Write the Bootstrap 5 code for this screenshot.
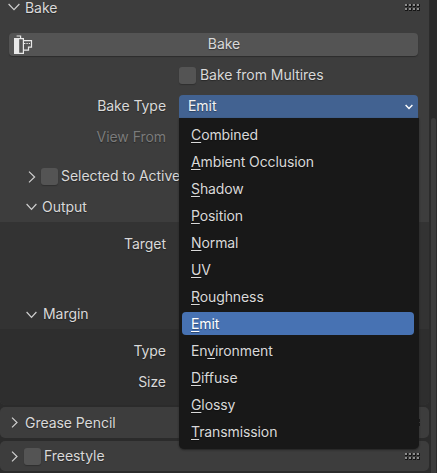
<!doctype html>
<html lang="en"><head><meta charset="utf-8">
<link href="https://cdn.jsdelivr.net/npm/bootstrap@5.3.0/dist/css/bootstrap.min.css" rel="stylesheet">
<style>
html,body{margin:0;height:473px;overflow:hidden;background:#2b2b2b}
body{font-family:Inter,"Noto Sans",sans-serif;font-size:14px;line-height:17px;letter-spacing:-.05px;color:#d9d9d9;text-shadow:0 1px 1px rgba(0,0,0,.35)}
.stage{position:relative;width:437px;height:473px;overflow:hidden}
.pane{width:429px;height:473px;flex:none}
.gut{width:8px;flex:none;padding:118px 1px 0 2px}
.sthumb{height:100%;background:#3d3d3d;border-radius:3px 3px 0 0}
.bakebox{background:#3d3d3d;height:405px;border-radius:0 0 5px 5px;overflow:hidden}
.hdr{height:14px}
.chev{flex:none}
.grip{margin-left:auto;margin-right:9px;flex:none}
.lbl{width:166px;text-align:right;flex:none}
.dim{color:#7b7b7b}
.ln{height:23px}
.ln>span:not(.tick),.selbox>span,.subhead>span,.head2>span,.fs>span:not(.tick){padding-bottom:2px}
.bakebtn{margin:19px 11px 0 9px;height:23px;padding-left:21px;background:#545454;border-radius:4px;position:relative;text-align:center;line-height:21px;box-shadow:0 1px 1px #2c2c2c}
.bakebtn svg{position:absolute;left:4px;top:1px}
.tick{width:17px;height:17px;background:#545454;border-radius:3px;flex:none;box-shadow:0 1px 1px #2f2f2f}
.selbox{width:239px;margin-left:13px;height:23px;background:#426291;border-radius:4px 4px 0 0;padding:0 5px 0 9px;color:#f2f2f2}
.subhead{height:30px;margin-top:4px}
.body1{background:#333333;height:107px;padding-top:11px}
.head2{height:29px;margin-top:44px}
.body2{background:#2e2e2e;height:76px;padding-top:11px}
.menu{position:absolute;left:179px;top:118px;width:240px;height:331px;background:#181818;border-radius:0 0 5px 5px;padding:3px 5px 0 3px;box-shadow:0 1px 2px #222;letter-spacing:-.1px}
.mi{height:27px;line-height:27px;padding-left:9px;color:#d9d9d9}
.mi.on{background:#4772b3;color:#fff;height:23px;line-height:23px;margin:2px 0;border-radius:4px}
.mi u{text-decoration-thickness:1px;text-underline-offset:2px}
.closed{height:31px;background:#3d3d3d;border-radius:5px;margin-top:2px}
.closed+.closed{margin-top:3px;height:30px}
</style></head><body>
<svg width="0" height="0" class="position-absolute"><defs><g id="dots"><g id="dotcol"><rect x="0" y="0" width="2" height="2" fill="#8c8c8c"/><rect x="0" y="4" width="2" height="2" fill="#8c8c8c"/><rect x="2" y="0" width="1" height="2" fill="#161616"/><rect x="2" y="4" width="1" height="2" fill="#161616"/><rect x="0" y="2" width="3" height="1" fill="#161616"/><rect x="0" y="6" width="3" height="1" fill="#161616"/></g><use href="#dotcol" x="4"/><use href="#dotcol" x="8"/><use href="#dotcol" x="12"/></g></defs></svg>
<div class="stage d-flex">
 <div class="pane">
  <div class="bakebox">
   <div class="hdr d-flex align-items-center">
    <svg class="chev" style="margin-left:8px" width="12" height="8" viewBox="0 0 12 8" fill="none" stroke="#cfcfcf" stroke-width="1.2"><path d="M.6 1 6 6.6 11.4 1"/></svg><span style="margin-left:5px">Bake</span><svg class="grip" width="15" height="7"><use href="#dots"/></svg>
   </div>
   <div class="bakebtn">
    <svg width="21" height="21" viewBox="0 0 21 21" fill="none" stroke="#e8e8e8" stroke-width="1.2"><path d="M3.6 2h4v2"/><path d="M1.6 4.6h8.8v14.8H1.6z"/><path d="M1.6 5.5h4v13.5h-4z" fill="#e8e8e8"/><path d="M10 6.6h8.5v6.6h-3v3H10"/><path d="M11 9.5h6" stroke-dasharray="1.4 1" stroke-width="1"/></svg>
    Bake</div>
   <div class="d-flex align-items-center ln" style="margin-top:8px;padding-left:179px;gap:4px"><span class="tick"></span><span>Bake from Multires</span></div>
   <div class="d-flex align-items-center ln" style="margin-top:8px"><span class="lbl">Bake Type</span>
    <div class="selbox d-flex align-items-center justify-content-between"><span>Emit</span>
     <svg width="8" height="6" viewBox="0 0 8 6" fill="none" stroke="#fff" stroke-width="1.4"><path d="M.6 1 4 4.6 7.4 1"/></svg></div></div>
   <div class="d-flex align-items-center ln" style="margin-top:8px"><span class="lbl dim">View From</span></div>
   <div class="d-flex align-items-center ln" style="margin-top:16px">
    <svg class="chev" style="margin-left:28px" width="8" height="12" viewBox="0 0 8 12" fill="none" stroke="#cfcfcf" stroke-width="1.2"><path d="M1 .6 6.6 6 1 11.4"/></svg>
    <span class="tick" style="margin-left:5px"></span><span style="margin-left:3px;white-space:nowrap">Selected to Active</span></div>
   <div class="subhead d-flex align-items-center">
    <svg class="chev" style="margin-left:26px" width="11" height="8" viewBox="0 0 11 8" fill="none" stroke="#cfcfcf" stroke-width="1.2"><path d="M.6 1 5.5 6.4 10.4 1"/></svg><span style="margin-left:5px">Output</span></div>
   <div class="body1">
    <div class="d-flex align-items-center ln"><span class="lbl">Target</span></div>
    <div class="head2 d-flex align-items-center">
     <svg class="chev" style="margin-left:26px" width="11" height="8" viewBox="0 0 11 8" fill="none" stroke="#cfcfcf" stroke-width="1.2"><path d="M.6 1 5.5 6.4 10.4 1"/></svg><span style="margin-left:6px">Margin</span></div>
   </div>
   <div class="body2">
    <div class="d-flex align-items-center ln"><span class="lbl">Type</span></div>
    <div class="d-flex align-items-center ln" style="margin-top:8px"><span class="lbl">Size</span></div>
   </div>
  </div>
  <div class="closed d-flex align-items-center">
   <svg class="chev" style="margin-left:11px" width="7" height="11" viewBox="0 0 7 11" fill="none" stroke="#cfcfcf" stroke-width="1.2"><path d="M1 .6 6 5.5 1 10.4"/></svg><span style="margin-left:7px">Grease Pencil</span><svg class="grip" width="15" height="7"><use href="#dots"/></svg></div>
  <div class="closed fs d-flex align-items-center">
   <svg class="chev" style="margin-left:11px" width="7" height="11" viewBox="0 0 7 11" fill="none" stroke="#cfcfcf" stroke-width="1.2"><path d="M1 .6 6 5.5 1 10.4"/></svg><span class="tick" style="margin-left:6px"></span><span style="margin-left:3px">Freestyle</span><svg class="grip" width="15" height="7"><use href="#dots"/></svg></div>
 </div>
 <div class="gut"><div class="sthumb"></div></div>
 <div class="menu">
  <div class="mi"><u>C</u>ombined</div>
  <div class="mi"><u>A</u>mbient Occlusion</div>
  <div class="mi"><u>S</u>hadow</div>
  <div class="mi"><u>P</u>osition</div>
  <div class="mi"><u>N</u>ormal</div>
  <div class="mi"><u>U</u>V</div>
  <div class="mi"><u>R</u>oughness</div>
  <div class="mi on"><u>E</u>mit</div>
  <div class="mi">En<u>v</u>ironment</div>
  <div class="mi"><u>D</u>iffuse</div>
  <div class="mi"><u>G</u>lossy</div>
  <div class="mi"><u>T</u>ransmission</div>
 </div>
</div>
</body></html>
